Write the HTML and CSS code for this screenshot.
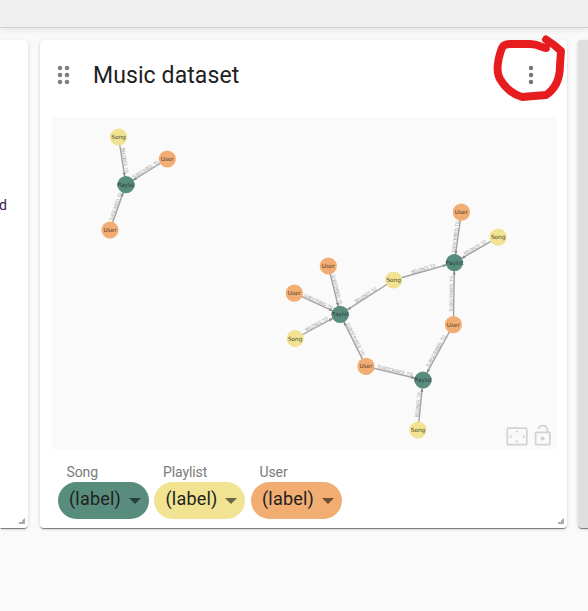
FILE: index.html
```html
<!DOCTYPE html>
<html lang="en">
<head>
<meta charset="utf-8">
<title>Dashboard</title>
<link rel="stylesheet" href="styles.css">
</head>
<body>
<header class="toolbar"></header>
<main class="board">
  <section class="card card-left"><span class="cut-text">d</span><svg class="resize" width="6" height="6" viewBox="0 0 6 6"><path d="M6 0v6H0V4h3V2.500z"/></svg></section>
  <section class="card card-main">
    <div class="card-head">
      <svg class="drag" width="14" height="20" viewBox="0 0 14 20"><g fill="#808080"><circle cx="3" cy="3" r="2.3"/><circle cx="10" cy="3" r="2.3"/><circle cx="3" cy="10" r="2.3"/><circle cx="10" cy="10" r="2.3"/><circle cx="3" cy="17" r="2.3"/><circle cx="10" cy="17" r="2.3"/></g></svg>
      <h2>Music dataset</h2>
      <svg class="more" width="6" height="20" viewBox="0 0 6 20"><g fill="#757575"><circle cx="3" cy="3" r="2.2"/><circle cx="3" cy="10" r="2.2"/><circle cx="3" cy="17" r="2.2"/></g></svg>
    </div>
    <svg class="graph" id="graph" width="505" height="332" viewBox="52 117 505 332">
      <g id="edges"></g>
      <g id="nodes"></g>
      <g fill="none" stroke="#d2d2d2" stroke-width="1.7">
        <rect x="507.3" y="428.2" width="19.5" height="16.5" rx="1"/>
        <rect x="535.6" y="432.3" width="14.3" height="12.4" rx="1"/>
        <path d="M538.3 429.3a4.600 4.600 0 0 1 9 0v3"/>
      </g>
      <g fill="#d2d2d2"><circle cx="542.6" cy="438.4" r="2"/><path d="M517 430l2 2.2h-4zM517 443l2-2.2h-4zM509.5 436.5l2-2v4zM525 436.5l-2-2v4z"/></g>
    </svg>
    <div class="legend">
      <div class="field"><label>Song</label><div class="pill green">(label)<i></i></div></div>
      <div class="field"><label>Playlist</label><div class="pill yellow">(label)<i></i></div></div>
      <div class="field"><label>User</label><div class="pill orange">(label)<i></i></div></div>
    </div>
    <svg class="resize" width="6" height="6" viewBox="0 0 6 6"><path d="M6 0v6H0V4h3V2.500z"/></svg>
  </section>
  <section class="card card-right"></section>
</main>
<svg class="marker" width="588" height="120" viewBox="0 0 588 120"><path d="M546 48C542 48 539 44 530 44L510 44Q503 44 501.500 49C497 62 496 72 500 79C505 88 514 95 522 97L546 95Q560 86 560 65L561 51Q555 45 546 39.500"/></svg>
<script src="graph.js"></script>
</body>
</html>
```

FILE: styles.css
```css
* { box-sizing: border-box; }
body { margin: 0; width: 588px; height: 611px; overflow: hidden; background: #fafafa; font-family: Roboto, "Liberation Sans", sans-serif; position: relative; }
.toolbar { height: 28px; background: #efefef; border-bottom: 1px solid #d0d0d0; box-shadow: 0 1px 7px rgba(0,0,0,.12); }
.board { display: grid; grid-template-columns: 28px 527px 20px; column-gap: 12px; padding-top: 12px; width: 599px; }
.card { position: relative; height: 488px; background: #fff; border-radius: 4px; box-shadow: 0 2px 1px -1px rgba(0,0,0,.38), 0 1px 1px rgba(0,0,0,.18), 0 1px 4px rgba(0,0,0,.13); }
.card-left { border-radius: 0 4px 4px 0; }
.card-right { background: #dfdfdf; margin-left: -1px; }
.cut-text { display: block; width: 8px; padding-top: 155px; margin-left: -1px; font-size: 14px; line-height: 20px; color: #3b1550; }
.card-head { display: flex; align-items: center; height: 77px; padding: 0 33px 7px 17px; }
.card-head h2 { flex: 1; margin: 2px 0 0 22px; font-size: 23px; line-height: 32px; font-weight: 400; letter-spacing: .1px; color: #212121; }
.graph { display: block; margin-left: 12px; background: #fafafa; }
.edge { stroke: #a2a2a2; stroke-width: 1.4; }
.arrow { fill: #8a8a8a; }
.edge-label { font: 4.5px "DejaVu Sans", sans-serif; fill: #9c9c9c; text-anchor: middle; }
.node-label { font: 5.8px "DejaVu Sans", sans-serif; fill: #222; fill-opacity: .85; text-anchor: middle; }
.legend { display: flex; gap: 5px; padding: 14px 0 0 17.5px; }
.field { width: 91.5px; }
.field label { display: block; padding-left: 9px; font-size: 14px; line-height: 18px; height: 19px; letter-spacing: -.1px; color: #7b7b7b; }
.pill { display: flex; align-items: center; justify-content: space-between; width: 91px; height: 37px; border-radius: 19px; padding: 0 8px 4px 11.5px; font-size: 18px; letter-spacing: .2px; color: #212121; }
.pill i { width: 0; height: 0; margin-top: 5px; border: 6px solid transparent; border-top-color: rgba(0,0,0,.55); border-bottom: 0; }
.green { background: #588d7e; }
.yellow { background: #f1e391; }
.orange { background: #f2ad72; }
.resize { position: absolute; right: 3px; bottom: 4px; fill: #aaa; }
.marker { position: absolute; left: 0; top: 0; fill: none; stroke: #e71c1e; stroke-width: 7.9; stroke-linecap: round; stroke-linejoin: round; }
```

FILE: graph.js
```js
const NS = "http://www.w3.org/2000/svg";
const colors = { Song: "#f1e391", Playlist: "#588d7e", User: "#f2ad72" };
const nodes = [
  ["Song", 118.5, 137], ["User", 167.3, 159], ["Playlist", 126, 184.6], ["User", 110, 230],
  ["User", 328.3, 266], ["User", 294.3, 293.2], ["Song", 295.2, 338.5], ["Playlist", 340.2, 314.4],
  ["Song", 393.7, 280], ["User", 366, 366.4], ["Playlist", 454.4, 262.6], ["User", 461.4, 212.2],
  ["Song", 498.2, 237.2], ["User", 453.4, 324.6], ["Playlist", 423, 380], ["Song", 418, 430]
];
const edges = [[0,2],[1,2],[3,2],[4,7],[5,7],[6,7],[8,7],[9,7],[8,10],[11,10],[12,10],[13,10],[13,14],[9,14],[15,14]];

function add(parent, tag, attrs, text) {
  const el = document.createElementNS(NS, tag);
  for (const key in attrs) el.setAttribute(key, attrs[key]);
  if (text) el.textContent = text;
  document.getElementById(parent).appendChild(el);
}

for (const [a, b] of edges) {
  const [type, x1, y1] = nodes[a];
  const [, x2, y2] = nodes[b];
  const deg = Math.atan2(y2 - y1, x2 - x1) * 180 / Math.PI;
  const upright = Math.abs(deg) > 90 ? deg + 180 : deg;
  const room = Math.hypot(x2 - x1, y2 - y1) - 19;
  const name = type === "Song" ? "BELONGS_TO" : "SUBSCRIBED_TO";
  const length = Math.min(room, type === "Song" ? 25 : 36);
  add("edges", "line", { class: "edge", x1, y1, x2, y2 });
  add("edges", "path", { class: "arrow", d: "M-8 0l-4-1.500v3z", transform: `translate(${x2} ${y2}) rotate(${deg})` });
  add("edges", "text", { class: "edge-label", y: -1, textLength: length, lengthAdjust: "spacingAndGlyphs", transform: `translate(${(x1 + x2) / 2} ${(y1 + y2) / 2}) rotate(${upright})` }, name);
}
for (const [type, x, y] of nodes) {
  const size = type === "Playlist" ? { textLength: 18, lengthAdjust: "spacingAndGlyphs" } : {};
  add("nodes", "circle", { cx: x, cy: y, r: 8.6, fill: colors[type] });
  add("nodes", "text", { class: "node-label", x, y: y + 2, ...size }, type);
}
```
